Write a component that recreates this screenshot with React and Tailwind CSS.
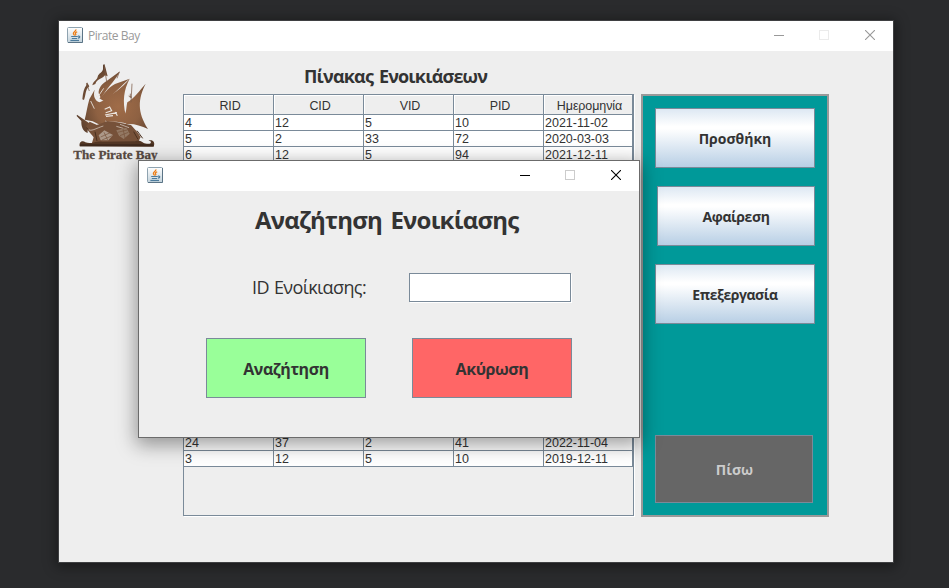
import React from "react";

const JavaIcon = () => (
  <svg width="16" height="16" viewBox="0 0 16 16" className="block shrink-0">
    <defs>
      <linearGradient id="javaBg" x1="0" y1="0" x2="0" y2="1">
        <stop offset="0" stopColor="#ffffff" />
        <stop offset="1" stopColor="#c3d3dc" />
      </linearGradient>
    </defs>
    <rect x="0.5" y="0.5" width="15" height="15" rx="1" fill="url(#javaBg)" stroke="#8fa3b0" />
    <path d="M1 15.5H15.5V1" fill="none" stroke="#5b7486" />
    <path d="M8.8 2.4C9.6 4 6 5 6.4 6.6C6.6 7.5 7.4 7.8 7.6 8.6M10.2 4.8C8.6 5.2 8 6 8.6 6.8C9 7.4 8.8 8 8.4 8.4" fill="none" stroke="#ee7d14" strokeWidth="1.3" />
    <path d="M4.2 9.5H10.8M4.8 11.5H10.2M11 9.2C13.4 8.6 13.2 10.9 11 11.2" fill="none" stroke="#4c7b9c" strokeWidth="1.2" />
    <path d="M3.4 13.5H12" fill="none" stroke="#4c7b9c" strokeWidth="1.2" />
  </svg>
);

const WindowControls = ({ color, dim }) => (
  <div className="flex h-7 items-center pr-[18px]">
    <div className="mt-px mr-[35px] h-px w-[10px]" style={{ background: color }} />
    <div className="mr-9 size-[10px] border" style={{ borderColor: dim }} />
    <svg width="10" height="10" viewBox="0 0 10 10" className="block">
      <path d="M0 0L10 10M10 0L0 10" stroke={color} strokeWidth="1.1" />
    </svg>
  </div>
);

const PirateLogo = () => (
  <svg width="88" height="102" viewBox="48 144 264 306" className="block">
    <defs>
      <radialGradient id="sail" gradientUnits="userSpaceOnUse" cx="190" cy="275" r="135">
        <stop offset="0" stopColor="#a06c48" />
        <stop offset="0.5" stopColor="#8e6142" />
        <stop offset="1" stopColor="#553b2a" />
      </radialGradient>
    </defs>
    <g fill="url(#sail)">
      <path d="M144 150L148 147L151 157L158 184L150 181C141 193 127 190 121 207L112 211C115 197 126 196 128 185C132 174 141 174 144 163Z" />
      <path d="M195 169C184 193 165 207 138 250L131 235C130 218 142 206 155 198Z" />
      <path d="M224 191C199 211 179 237 146 258L133 250C150 237 155 220 180 207Z" />
      <path d="M224 191C206 225 202 258 212 300L216 326C195 320 178 320 157 321L143 310L147 250C171 240 200 220 224 191Z" />
      <path d="M272 206C249 251 246 291 279 342C257 332 233 325 214 328L208 300C216 288 213 276 217 262C237 250 255 225 272 206Z" />
      <path d="M119 224C113 246 122 258 134 262L149 255L152 323L137 331L113 319L89 314C94 297 97 273 103 253Z" />
      <path d="M96 202L103 214L98 219C92 226 92 241 87 255L82 253C84 233 87 219 94 211Z" />
      <path d="M66 299L105 326L132 329C112 327 96 334 98 354C84 349 78 335 79 318L65 303Z" />
    </g>
    <path d="M104 320L126 330L155 319L188 322L228 330L246 350L257 366L250 380L110 387L116 367C105 352 94 345 94 334Z" fill="#765139" />
    <path d="M74 394C71 379 84 375 91 382C110 389 123 376 142 380L240 379C256 370 261 385 276 386C290 389 292 376 280 377C292 372 302 380 296 395Z" fill="#523624" />
    <path d="M147 150L155 200M193 171L186 190M231 206L228 262M226 236V249M94 204L103 228M221 243L231 247" fill="none" stroke="#7b5a46" strokeWidth="2.2" />
    <g fill="none" stroke="#ebe5df">
      <path d="M149 283L164 276L170 287L152 293M150 300L186 293M153 304L174 302M181 291L187 302" strokeWidth="3.4" />
      <path d="M107 258L118 281M120 236L127 248L146 220" strokeWidth="2.6" />
      <path d="M98 341C106 353 124 339 145 333M184 334L205 340M195 328L222 338" strokeWidth="1.8" />
    </g>
    <path d="M131 361L148 346L174 360L160 376L137 376Z" fill="#ac9888" />
    <path d="M184 346L214 338L224 356L206 372L192 362Z" fill="#937863" />
    <path d="M137 366L168 352M141 375L172 362M147 352L158 375M188 352L216 345M195 362L220 352M204 342L210 369" stroke="#765139" strokeWidth="2" />
    <path d="M236 350L249 373M246 347L263 370M101 344L94 338M120 350L126 378" stroke="#49301f" strokeWidth="3" />
    <path d="M75 391H295" stroke="#3e291c" strokeWidth="6" />
    <text x="55" y="433" textLength="253" lengthAdjust="spacingAndGlyphs" fontSize="40" fontWeight="700" fill="#574941" stroke="#574941" strokeWidth="0.8" fontFamily="'Liberation Serif', serif">The Pirate Bay</text>
  </svg>
);

const HEAD = ["RID", "CID", "VID", "PID", "Ημερομηνία"];
const TOP_ROWS = [
  ["4", "12", "5", "10", "2021-11-02"],
  ["5", "2", "33", "72", "2020-03-03"],
  ["6", "12", "5", "94", "2021-12-11"],
];
const BOTTOM_ROWS = [
  ["24", "37", "2", "41", "2022-11-04"],
  ["3", "12", "5", "10", "2019-12-11"],
];

const COLS = "grid grid-cols-[90px_90px_90px_90px_89px]";

const Row = ({ cells }) => (
  <div className={`${COLS} h-4 bg-white`}>
    {cells.map((c, i) => (
      <div key={i} className="h-4 border-r border-b border-[#7a8a99] pl-px text-[12.5px] leading-[17px]">
        {c}
      </div>
    ))}
  </div>
);

const RentalTable = () => (
  <div className="h-[422px] w-[451px] border border-[#7a8a99] font-['Liberation_Sans',sans-serif] shadow-[1px_1px_0_#fff]">
    <div className={`${COLS} h-5`}>
      {HEAD.map((h) => (
        <div key={h} className="border-r border-b border-[#7a8a99]">
          <div className="h-[19px] border-t border-l border-white pl-0.5 text-center text-[12.5px] leading-[20px] tracking-[-0.1px]">{h}</div>
        </div>
      ))}
    </div>
    {TOP_ROWS.map((r, i) => <Row key={i} cells={r} />)}
    <div className="h-[272px] w-[449px] border-r border-[#7a8a99] bg-white" />
    {BOTTOM_ROWS.map((r, i) => <Row key={i} cells={r} />)}
  </div>
);

const SideButton = ({ children, className }) => (
  <button className={`flex h-[60px] items-center justify-center border border-[#7a8a99] bg-[linear-gradient(180deg,#dde8f3_0%,#ffffff_30%,#ffffff_34%,#b8cfe5_100%)] pt-px text-[14px] font-bold ${className}`}>
    {children}
  </button>
);

const SearchDialog = () => (
  <div className="absolute top-[160px] left-[138px] h-[278px] w-[502px] border border-[#6b6b6b] bg-[#eeeeee] shadow-[0_5px_18px_2px_rgba(0,0,0,0.38)]">
    <div className="flex h-[30px] justify-between bg-white pl-2">
      <div className="pt-1.5">
        <JavaIcon />
      </div>
      <WindowControls color="#000000" dim="#cccccc" />
    </div>
    <h2 className="mt-3 pl-[116px] text-[24px] leading-[34px] font-bold tracking-[-0.8px] whitespace-nowrap [word-spacing:3px]">Αναζήτηση Ενοικίασης</h2>
    <div className="mt-9 flex h-[29px] items-center pl-[113px]">
      <label className="w-[157px] text-[18px] tracking-[-0.6px] whitespace-nowrap [word-spacing:1px]">ID Ενοίκιασης:</label>
      <div className="h-[29px] w-[162px] border border-[#7a8a99] bg-white shadow-[1px_1px_0_#fff]" />
    </div>
    <div className="mt-9 flex gap-[46px] pl-[67px] text-[16px] font-bold tracking-[-0.45px]">
      <button className="h-[60px] w-[160px] border border-[#7a8a99] bg-[#99ff99] pt-0.5">Αναζήτηση</button>
      <button className="h-[60px] w-[160px] border border-[#7a8a99] bg-[#ff6666] pt-0.5">Ακύρωση</button>
    </div>
  </div>
);

export default function App() {
  return (
    <div className="relative h-[588px] w-[949px] overflow-hidden bg-[#2a2b2d] pt-5 pl-[58px] font-['Open_Sans','Noto_Sans',sans-serif] text-[#333333]">
      <div className="h-[543px] w-[836px] border border-[#3f4042] bg-[#eeeeee] shadow-[0_2px_12px_2px_rgba(0,0,0,0.4)]">
        <div className="flex h-[30px] justify-between bg-white pl-2">
          <div className="flex gap-[5px] pt-1.5">
            <JavaIcon />
            <span className="text-[12px] leading-[17px] tracking-[-0.45px] text-[#999999]">Pirate Bay</span>
          </div>
          <WindowControls color="#999999" dim="#ebebeb" />
        </div>
        <div className="flex">
          <div className="w-[124px] pt-3 pl-3">
            <PirateLogo />
          </div>
          <div className="w-[458px]">
            <h1 className="h-[43px] pt-[11px] pl-[121px] text-[18px] leading-[28px] font-bold tracking-[-0.83px] whitespace-nowrap [word-spacing:2px]">Πίνακας Ενοικιάσεων</h1>
            <RentalTable />
          </div>
          <div className="mt-[43px] flex h-[423px] w-[188px] flex-col border-2 border-[#999999] bg-[#009999] pt-3 pr-3 pl-3">
            <SideButton className="w-[160px]">Προσθήκη</SideButton>
            <SideButton className="mt-[18px] ml-0.5 w-[158px] tracking-[-0.4px]">Αφαίρεση</SideButton>
            <SideButton className="mt-[18px] w-[160px] tracking-[-0.45px]">Επεξεργασία</SideButton>
            <button className="mt-[111px] h-[68px] w-[158px] border border-[#7a8a99] bg-[#666666] pl-px text-[14px] font-bold text-[#cccccc]">Πίσω</button>
          </div>
        </div>
      </div>
      <SearchDialog />
    </div>
  );
}
